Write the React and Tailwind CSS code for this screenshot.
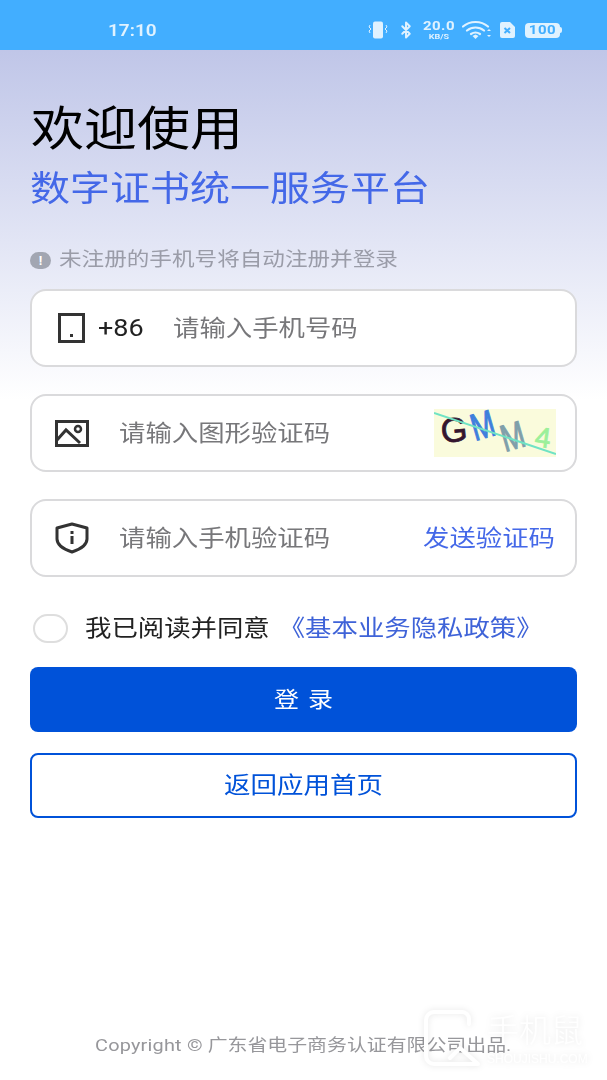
import { Bluetooth } from 'lucide-react';

const fontCls = "font-['Roboto','Noto_Sans_CJK_SC',sans-serif]";
const boxCls = 'h-[78px] bg-white border-2 border-[#dadadc] rounded-[16px] flex items-center';
const placeholderCls = 'text-[26.400px] leading-none text-[#77777a] scale-y-[0.87] whitespace-nowrap';

function StatusBar() {
  return (
    <div className="h-[50px] bg-[#42aeff] flex items-center pt-[10px] pl-[108px] pr-[45px] justify-between text-[#e0f2ff]">
      <span className="text-[19px] font-semibold leading-none scale-y-[0.85]">17:10</span>
      <div className="flex items-center">
        <svg width="20" height="18" viewBox="0 0 20 18" fill="none" className="mr-[9px]">
          <rect x="5" y="0.500" width="10" height="17" rx="2" fill="currentColor" />
          <path d="M2 4l-1 2 2 2-2 2 1 2M18 4l1 2-2 2 2 2-1 2" stroke="currentColor" strokeWidth="1" />
        </svg>
        <Bluetooth size={18} strokeWidth={2.6} className="mr-[7px]" />
        <div className="w-[34px] flex flex-col items-center leading-none font-bold mr-[6px]">
          <span className="text-[15px] leading-[12px] scale-y-[0.85] tracking-[0.5px]">20.0</span>
          <span className="text-[9px] leading-[8px] scale-y-[0.85]">KB/S</span>
        </div>
        <svg width="30" height="20" viewBox="0 0 30 20" fill="none" className="mr-[7px]">
          <path d="M1 6.500C8 .5 19 .5 26 6.500M5 10.500c5-4 12-4 17 0M9 14c3-2 6-2 9 0" stroke="currentColor" strokeWidth="2.200" strokeLinecap="round" />
          <path d="M10.500 16l3-1.500 3 1.500-3 3z" fill="currentColor" />
          <path d="M25 11l2-2 2 2zM25 15l2 2 2-2z" fill="currentColor" />
        </svg>
        <svg width="17" height="18" viewBox="0 0 17 18" className="mr-[9px]">
          <path d="M3 1h8l5 5v9a2 2 0 0 1-2 2H3a2 2 0 0 1-2-2V3a2 2 0 0 1 2-2z" fill="currentColor" />
          <path d="M5.500 7l5.500 5M11 7l-5.500 5" stroke="#42aeff" strokeWidth="2" />
        </svg>
        <div className="flex items-center">
          <div className="w-[35px] h-[15px] bg-[#e0f2ff] rounded-[4px] flex items-center justify-center text-[#42aeff] text-[15px] font-bold leading-none tracking-[0.5px]">
            <span className="scale-y-[0.85]">100</span>
          </div>
          <div className="w-[2px] h-[6px] bg-[#e0f2ff] rounded-r-sm" />
        </div>
      </div>
    </div>
  );
}

function Captcha() {
  return (
    <svg width="122" height="48" viewBox="0 0 122 48" className="shrink-0">
      <rect width="122" height="48" fill="#fafbdc" />
      <text fontSize="34" fontFamily="Liberation Sans" fill="#35162e" stroke="#35162e" strokeWidth="0.800" transform="translate(8 34) rotate(-6)">G</text>
      <text fontSize="28" fontFamily="Liberation Sans" fill="#3f7fdc" stroke="#3f7fdc" strokeWidth="0.800" transform="translate(41 32) rotate(-16) scale(1 1.350)">M</text>
      <text fontSize="28" fontFamily="Liberation Sans" fill="#7f9faa" stroke="#7f9faa" strokeWidth="0.800" transform="translate(71 43) rotate(-16) scale(1 1.350)">M</text>
      <text fontSize="28" fontFamily="Liberation Sans" fill="#9cf09a" stroke="#9cf09a" strokeWidth="0.800" transform="translate(100 37) rotate(8)">4</text>
      <path d="M0 4L122 45" stroke="#6fe3c4" strokeWidth="2" />
    </svg>
  );
}

function Watermark() {
  return (
    <div className="absolute left-[424px] top-[1010px] flex items-start text-white drop-shadow-[0_0_3px_rgba(0,0,0,0.1)]">
      <svg width="58" height="60" viewBox="0 0 58 60" fill="none">
        <path d="M38 2H10a8 8 0 0 0-8 8v36a8 8 0 0 0 8 8h44L36 38l-10 10" stroke="currentColor" strokeWidth="4" strokeLinecap="round" strokeLinejoin="round" />
        <path d="M38 2a7 7 0 0 1 7 7v5" stroke="currentColor" strokeWidth="4" strokeLinecap="round" />
      </svg>
      <div className="ml-[5px] flex flex-col">
        <span className="text-[32px] leading-[42px] font-light whitespace-nowrap">手机鼠</span>
        <span className="text-[12px] leading-[14px] font-['Liberation_Sans'] whitespace-nowrap">SHOUJISHU.COM</span>
      </div>
    </div>
  );
}

export default function App() {
  return (
    <div className={`${fontCls} relative h-[1080px] w-[607px] overflow-hidden bg-white`}>
      <StatusBar />
      <div className="bg-gradient-to-b from-[#c0c6e8] to-white h-[350px] -mb-[350px]" />

      <div className="px-[30px] relative">
        <h1 className="mt-[48px] text-[53px] leading-[62px] text-black scale-y-[0.87] origin-center pl-[1px]">欢迎使用</h1>
        <h2 className="mt-[2px] text-[40px] leading-[56px] text-[#4468e8] scale-y-[0.87]">数字证书统一服务平台</h2>

        <div className="mt-[29px] h-[26px] flex items-center">
          <div className="w-[21px] h-[17px] rounded-full bg-[#a2a6b2] text-white text-[13px] font-bold flex items-center justify-center leading-none">!</div>
          <span className="ml-[8px] text-[22.600px] leading-none text-[#9a9ca8] scale-y-[0.87] whitespace-nowrap">未注册的手机号将自动注册并登录</span>
        </div>

        <div className={`${boxCls} mt-[16px] pl-[26px]`}>
          <div className="w-[27px] h-[30px] border-[3px] border-[#333] flex items-end justify-center pb-[3px]">
            <div className="w-[3px] h-[3px] bg-[#333]" />
          </div>
          <span className="ml-[13px] w-[75px] text-[27px] leading-none text-[#222] scale-y-[0.87]">+86</span>
          <span className={placeholderCls}>请输入手机号码</span>
        </div>

        <div className={`${boxCls} mt-[27px] pl-[23px] pr-[19px]`}>
          <svg width="34" height="27" viewBox="0 0 34 27" fill="none" className="shrink-0">
            <rect x="1.500" y="1.500" width="31" height="24" stroke="#333" strokeWidth="3" />
            <path d="M2 20l9-10 14 13" stroke="#333" strokeWidth="3" />
            <circle cx="23" cy="9" r="3" stroke="#333" strokeWidth="2.500" />
          </svg>
          <span className={`${placeholderCls} ml-[30px] flex-1`}>请输入图形验证码</span>
          <Captcha />
        </div>

        <div className={`${boxCls} mt-[27px] pl-[23px] pr-[20px]`}>
          <svg width="34" height="32" viewBox="0 0 34 32" fill="none" className="shrink-0">
            <path d="M17 2l15 4v11c0 7-9 11-15 13C11 28 2 24 2 17V6z" stroke="#333" strokeWidth="3" strokeLinejoin="round" />
            <rect x="15.500" y="9" width="3" height="3" fill="#333" />
            <rect x="15.500" y="14" width="3" height="8" fill="#333" />
          </svg>
          <span className={`${placeholderCls} ml-[30px] flex-1`}>请输入手机验证码</span>
          <span className="text-[26.400px] leading-none text-[#4468e8] scale-y-[0.87] whitespace-nowrap">发送验证码</span>
        </div>

        <div className="mt-[33px] h-[36px] flex items-center pl-[3px]">
          <div className="w-[35px] h-[29px] rounded-full border-2 border-[#dedede] bg-white shrink-0" />
          <span className="ml-[17px] text-[26.400px] leading-none text-[#222] scale-y-[0.87] whitespace-nowrap">我已阅读并同意</span>
          <span className="ml-[9px] text-[26.400px] leading-none text-[#3f63d8] scale-y-[0.87] whitespace-nowrap">《基本业务隐私政策》</span>
        </div>

        <button className="mt-[21px] w-full h-[65px] rounded-[8px] bg-[#0052d9] text-white flex items-center justify-center">
          <span className="text-[25px] leading-none scale-y-[0.87] tracking-[9px] pl-[9px]">登录</span>
        </button>

        <button className="mt-[21px] w-full h-[65px] rounded-[8px] bg-white border-2 border-[#0052d9] text-[#0052d9] flex items-center justify-center">
          <span className="text-[26.500px] leading-none scale-y-[0.87]">返回应用首页</span>
        </button>

        <div className="mt-[218px] pl-[65px] text-[#97979b] text-[19.900px] leading-none scale-y-[0.87] whitespace-nowrap">
          <span className="tracking-[0.2px]">Copyright ©</span> 广东省电子商务认证有限公司出品.
        </div>
      </div>

      <Watermark />
    </div>
  );
}
